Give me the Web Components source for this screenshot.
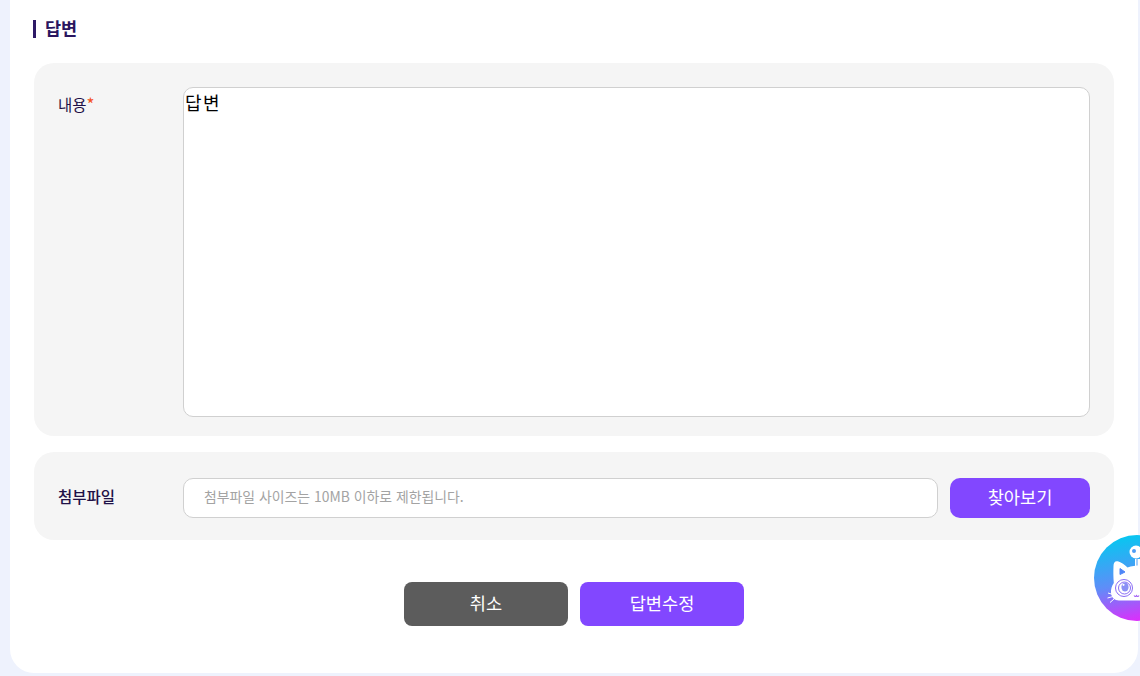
<!DOCTYPE html>
<html lang="ko">
<head>
<meta charset="utf-8">
<title>답변</title>
<style>
  html, body { margin: 0; height: 676px; overflow: hidden; background: #EEF2FD; }
  body { font-family: "Noto Sans CJK KR", "Noto Sans", sans-serif; color: #1F1147; }
</style>
</head>
<body>
<answer-page>
  <section-title>답변</section-title>
  <form-panel label="내용" required pad="24px 24px 19px" top>
    <answer-box>답변</answer-box>
  </form-panel>
  <form-panel label="첨부파일" strong pad="26px 24px 22px">
    <file-field placeholder="첨부파일 사이즈는 10MB 이하로 제한됩니다." button="찾아보기"></file-field>
  </form-panel>
  <action-bar>
    <ui-button tone="gray" wide>취소</ui-button>
    <ui-button wide>답변수정</ui-button>
  </action-bar>
</answer-page>
<chat-widget></chat-widget>

<script>
class AnswerPage extends HTMLElement {
  constructor() {
    super();
    this.attachShadow({ mode: 'open' });
  }
  connectedCallback() {
    this.shadowRoot.innerHTML = `
      <style>
        :host {
          display: flex;
          flex-direction: column;
          box-sizing: border-box;
          width: 1128px;
          height: 673px;
          margin-left: 10px;
          padding: 20px 24px 0 24px;
          background: #FFF;
          border-radius: 0 0 24px 24px;
        }
      </style>
      <slot></slot>
    `;
  }
}
customElements.define('answer-page', AnswerPage);

class SectionTitle extends HTMLElement {
  constructor() {
    super();
    this.attachShadow({ mode: 'open' });
  }
  connectedCallback() {
    this.shadowRoot.innerHTML = `
      <style>
        :host {
          display: flex;
          align-items: center;
          gap: 9px;
          height: 18px;
          margin-bottom: 25px;
          font-size: 17.5px;
          font-weight: 700;
          line-height: 18px;
          color: #2A1660;
        }
        #bar { width: 3px; height: 18px; background: #2E1A66; margin-left: -1px; }
        #txt { padding-bottom: 2px; }
      </style>
      <div id="bar"></div>
      <span id="txt"><slot></slot></span>
    `;
  }
}
customElements.define('section-title', SectionTitle);

class FormPanel extends HTMLElement {
  constructor() {
    super();
    this.attachShadow({ mode: 'open' });
  }
  connectedCallback() {
    const star = this.hasAttribute('required') ? '<span id="star">*</span>' : '';
    const top = this.hasAttribute('top');
    const weight = this.hasAttribute('strong') ? 500 : 400;
    this.shadowRoot.innerHTML = `
      <style>
        :host {
          display: flex;
          align-items: ${top ? 'flex-start' : 'center'};
          box-sizing: border-box;
          padding: ${this.getAttribute('pad')};
          margin-bottom: 16px;
          background: #F5F5F5;
          border-radius: 20px;
        }
        #label {
          flex: 0 0 125px;
          font-size: 15.5px;
          font-weight: ${weight};
          line-height: 22px;
          text-align: left;
          color: #1F1147;
          padding-bottom: ${top ? '0' : '4px'};
        }
        #label.top { padding-top: 6px; }
        #star { color: #F4511E; font-size: 17px; }
        #body { flex: 1; min-width: 0; }
      </style>
      <div id="label" class="${top ? 'top' : ''}">${this.getAttribute('label')}${star}</div>
      <div id="body"><slot></slot></div>
    `;
  }
}
customElements.define('form-panel', FormPanel);

class AnswerBox extends HTMLElement {
  constructor() {
    super();
    this.attachShadow({ mode: 'open' });
  }
  connectedCallback() {
    this.shadowRoot.innerHTML = `
      <style>
        :host {
          display: block;
          box-sizing: border-box;
          height: 330px;
          padding: 1px;
          background: #FFF;
          border: 1px solid #D0D0D0;
          border-radius: 10px;
          font-size: 18px;
          line-height: 26px;
          letter-spacing: 1.5px;
          color: #000;
        }
      </style>
      <slot></slot>
    `;
  }
}
customElements.define('answer-box', AnswerBox);

class FileField extends HTMLElement {
  constructor() {
    super();
    this.attachShadow({ mode: 'open' });
  }
  connectedCallback() {
    this.shadowRoot.innerHTML = `
      <style>
        :host { display: flex; gap: 12px; height: 40px; }
        #input {
          flex: 1;
          display: flex;
          align-items: center;
          box-sizing: border-box;
          padding: 0 20px 4px;
          background: #FFF;
          border: 1px solid #D0D0D0;
          border-radius: 10px;
          font-size: 13.9px;
          color: #A3A3A3;
        }
        ui-button { width: 140px; }
      </style>
      <div id="input">${this.getAttribute('placeholder')}</div>
      <ui-button>${this.getAttribute('button')}</ui-button>
    `;
  }
}
customElements.define('file-field', FileField);

class ActionBar extends HTMLElement {
  constructor() {
    super();
    this.attachShadow({ mode: 'open' });
  }
  connectedCallback() {
    this.shadowRoot.innerHTML = `
      <style>
        :host {
          display: flex;
          justify-content: center;
          gap: 12px;
          margin-top: 26px;
        }
      </style>
      <slot></slot>
    `;
  }
}
customElements.define('action-bar', ActionBar);

class UiButton extends HTMLElement {
  constructor() {
    super();
    this.attachShadow({ mode: 'open' });
  }
  connectedCallback() {
    const gray = this.getAttribute('tone') === 'gray';
    const wide = this.hasAttribute('wide');
    this.shadowRoot.innerHTML = `
      <style>
        :host {
          display: flex;
          align-items: center;
          justify-content: center;
          box-sizing: border-box;
          padding-bottom: 3px;
          ${wide ? 'width: 164px; height: 44px;' : ''}
          background: ${gray ? '#5C5C5C' : '#8247FF'};
          border-radius: ${wide ? '8px' : '10px'};
          font-size: 17.6px;
          color: #FFF;
          cursor: pointer;
        }
      </style>
      <slot></slot>
    `;
  }
}
customElements.define('ui-button', UiButton);

class ChatWidget extends HTMLElement {
  constructor() {
    super();
    this.attachShadow({ mode: 'open' });
  }
  connectedCallback() {
    // floating launcher, cut off by the right edge of the window
    this.shadowRoot.innerHTML = `
      <style>
        :host { position: fixed; left: 1094px; top: 535px; width: 86px; height: 86px; display: block; }
        svg { display: block; }
      </style>
      <svg width="86" height="86" viewBox="0 0 86 86">
        <defs>
          <linearGradient id="g" x1="0.35" y1="0" x2="0.55" y2="1">
            <stop offset="0" stop-color="#05C8F0"/>
            <stop offset="0.55" stop-color="#5F8DF8"/>
            <stop offset="1" stop-color="#E02BFB"/>
          </linearGradient>
        </defs>
        <circle cx="43" cy="43" r="43" fill="url(#g)"/>
        <circle cx="42" cy="17" r="6.5" fill="#FFF"/>
        <circle cx="40" cy="16" r="2" fill="#4E9CF5"/>
        <path d="M41 24h5v7h-5z" fill="#FFF"/>
        <path d="M43 24v7" stroke="#4E9CF5" stroke-width="1"/>
        <path d="M19.500 31c0-4 2-5.500 5-4.500 3 1 6 3 9 6 4-1.500 8.500-2 12.500-2v35H25c-4.500 0-7.500-3-8-7.500-.3-3.500.8-7 2.800-10-.5-6-.5-11.500-.3-17z" fill="#FFF"/>
        <path d="M26 33.500l5 3.500-5 2.500z" fill="#4E86F7" stroke="#4E86F7" stroke-width="1" stroke-linejoin="round"/>
        <circle cx="30" cy="53" r="8.500" fill="#FFF" stroke="#8A6CF5" stroke-width="1"/>
        <circle cx="30.500" cy="53" r="6" fill="#FFF" stroke="#8A6CF5" stroke-width="1"/>
        <ellipse cx="31" cy="52" rx="3.600" ry="4.600" fill="#8A90F5"/>
        <circle cx="29.500" cy="49.800" r="1.100" fill="#FFF"/>
        <path d="M14 58l5 1.500M13.500 63l5.500-1.500M16 67.500l4-3.500" stroke="#FFF" stroke-width="1" fill="none"/>
        <path d="M40 60.500c1 1.300 1.700 1.300 2.500 0 .8 1.300 1.700 1.300 2.500 0" stroke="#A05CF5" stroke-width="1.100" fill="none"/>
      </svg>
    `;
  }
}
customElements.define('chat-widget', ChatWidget);
</script>
</body>
</html>
